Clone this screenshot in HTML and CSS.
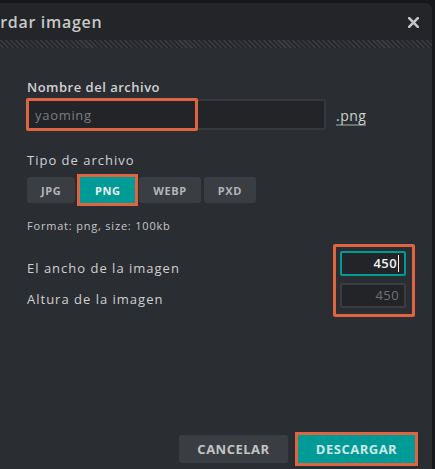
FILE: index.html
```html
<!DOCTYPE html>
<html lang="es">
<head>
    <meta charset="UTF-8">
    <meta name="viewport" content="width=device-width, initial-scale=1.0">
    <title>Guardar imagen</title>
    <link rel="stylesheet" href="styles.css">
</head>
<body>
    <div class="dialog">
        <div class="dialog-header">
            <h1 class="dialog-title">Guardar imagen</h1>
            <button class="close-btn" aria-label="Cerrar">
                <svg width="11" height="11" viewBox="0 0 11 11">
                    <path d="M1.2 1.2 L9.8 9.8 M9.8 1.2 L1.2 9.8" stroke="#c4c4c4" stroke-width="2.6" stroke-linecap="square"/>
                </svg>
            </button>
        </div>
        <div class="hatch"></div>

        <div class="dialog-body">
            <label class="field-label">Nombre del archivo</label>
            <div class="name-row">
                <div class="name-field">
                    <input class="text-input" type="text" placeholder="yaoming">
                    <span class="mark mark-name"></span>
                </div>
                <span class="ext">.png</span>
            </div>

            <label class="field-label type-label">Tipo de archivo</label>
            <div class="type-group">
                <button class="type-btn">JPG</button>
                <button class="type-btn active">PNG</button>
                <button class="type-btn">WEBP</button>
                <button class="type-btn">PXD</button>
            </div>

            <p class="format-info">Format: png, size: 100kb</p>

            <div class="size-block">
                <div class="size-labels">
                    <span class="size-label">El ancho de la imagen</span>
                    <span class="size-label">Altura de la imagen</span>
                </div>
                <div class="size-inputs">
                    <div class="num-input focused">450<span class="caret"></span></div>
                    <div class="num-input">450</div>
                </div>
            </div>

            <div class="dialog-footer">
                <button class="btn btn-cancel">CANCELAR</button>
                <button class="btn btn-download">DESCARGAR</button>
            </div>
        </div>
    </div>
</body>
</html>
```

FILE: styles.css
```css
body {
    margin: 0;
    background-color: #17181b;
    font-family: 'Open Sans', 'Noto Sans', sans-serif;
    overflow: hidden;
    height: 469px;
}
.dialog {
    margin-top: 3px;
    width: 432px;
    height: 480px;
    background-color: #2a2d32;
    border-top-right-radius: 7px;
    overflow: hidden;
}
.dialog-header {
    height: 37px;
    background-color: #232529;
    display: flex;
    align-items: center;
    justify-content: space-between;
    padding-right: 13px;
}
.dialog-title {
    margin: 0 0 0 -33px;
    font-size: 16px;
    font-weight: 600;
    letter-spacing: 0.7px;
    color: #c8c8c8;
}
.close-btn {
    background: none;
    border: none;
    padding: 0;
    width: 11px;
    height: 11px;
    display: flex;
    margin-top: 1px;
}
.hatch {
    height: 8px;
    background-color: #25272b;
    background-image: repeating-linear-gradient(45deg, #25272b 0, #25272b 2px, #393b40 2px, #393b40 3.5px);
}
.dialog-body {
    padding: 31px 17px 0 27px;
}
.field-label {
    display: block;
    font-size: 13px;
    font-weight: 600;
    line-height: 16px;
    letter-spacing: 0.5px;
    color: #d2d2d2;
}
.name-row {
    display: flex;
    align-items: center;
    margin-top: 4px;
}
.name-field {
    position: relative;
}
.text-input {
    box-sizing: border-box;
    width: 299px;
    height: 31px;
    background-color: #222428;
    border: 2px solid #36383c;
    border-radius: 2px;
    padding: 0 6px;
    font-family: inherit;
    font-size: 13px;
    letter-spacing: 0.7px;
    color: #d0d0d0;
    outline: none;
}
.text-input::placeholder {
    color: #7b7e82;
}
.mark {
    position: absolute;
    border: 3px solid #df6440;
    border-radius: 2px;
    pointer-events: none;
}
.mark-name {
    left: -1px;
    top: -1px;
    width: 166px;
    height: 27px;
}
.ext {
    margin-left: 10px;
    font-size: 14px;
    letter-spacing: 0.5px;
    color: #cfcfcf;
    border-bottom: 2px solid #6a6d71;
    line-height: 17px;
    margin-top: 3px;
}
.type-label {
    margin-top: 22px;
    font-weight: 400;
    letter-spacing: 1px;
}
.type-group {
    display: flex;
    gap: 3px;
    margin-top: 9px;
}
.type-btn {
    height: 26px;
    padding: 0 14px;
    border: none;
    border-radius: 3px;
    background-color: #3a3d42;
    font-family: inherit;
    font-size: 11px;
    font-weight: 700;
    letter-spacing: 0.6px;
    color: #b4b6b9;
}
.type-btn.active {
    width: 55px;
    margin: 0 1px 0 2px;
    background-color: #009b96;
    color: #f0f0f0;
    border-radius: 0;
    box-shadow: 0 0 0 3px #df6440;
}
.format-info {
    margin: 16px 0 0;
    font-size: 11px;
    line-height: 14px;
    letter-spacing: 0.8px;
    color: #c6c6c6;
}
.size-block {
    display: flex;
    justify-content: space-between;
    margin-top: 11px;
}
.size-labels {
    display: flex;
    flex-direction: column;
    gap: 13px;
    padding-top: 15px;
}
.size-label {
    font-size: 13px;
    line-height: 18px;
    letter-spacing: 1px;
    color: #d0d0d0;
}
.size-inputs {
    display: flex;
    flex-direction: column;
    gap: 7px;
    border: 3px solid #df6440;
    border-radius: 2px;
    padding: 4px 6px 6px 4px;
}
.num-input {
    box-sizing: border-box;
    width: 66px;
    height: 25px;
    background-color: #222428;
    border: 2px solid #3a3c40;
    border-radius: 2px;
    padding-right: 5px;
    text-align: right;
    font-size: 13px;
    line-height: 21px;
    letter-spacing: 0.4px;
    color: #6f7276;
}
.num-input.focused {
    border-color: #009b96;
    color: #f2f2f2;
    font-weight: 600;
}
.caret {
    display: inline-block;
    width: 1px;
    height: 17px;
    background-color: #f2f2f2;
    vertical-align: -4px;
    margin-left: 1px;
}
.dialog-footer {
    display: flex;
    justify-content: flex-end;
    gap: 10px;
    margin-top: 118px;
}
.btn {
    height: 28px;
    border: none;
    border-radius: 3px;
    font-family: inherit;
    font-size: 13px;
    font-weight: 700;
    letter-spacing: 0.5px;
}
.btn-cancel {
    width: 109px;
    background-color: #3a3d42;
    color: #c4c4c4;
}
.btn-download {
    width: 117px;
    background-color: #009b96;
    color: #cfe6e4;
    border-radius: 0;
    box-shadow: 0 0 0 3px #df6440;
}
```
